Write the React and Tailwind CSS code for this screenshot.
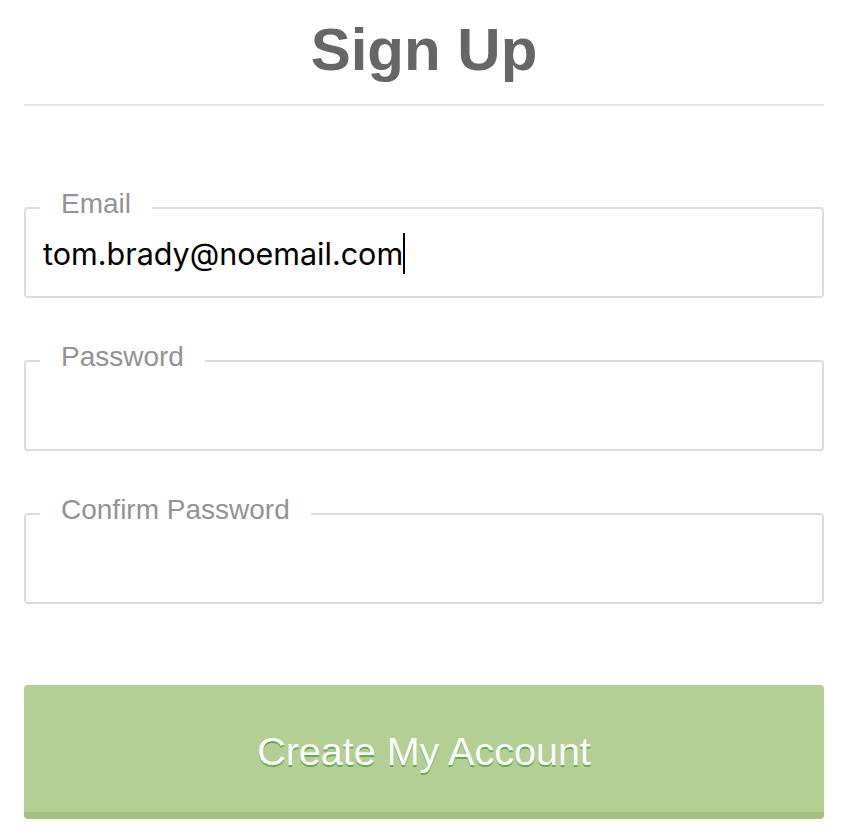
import React from "react";

function Field({ label, children }) {
    return (
        <fieldset className="m-0 border-2 border-[#dcdcdc] rounded-[4px] px-[14px] pt-0 pb-0">
            <legend className="px-[21px] pb-[8px] text-[28px] leading-[22px] text-[#939393]">{label}</legend>
            <div className="h-[73px]">{children}</div>
        </fieldset>
    );
}

export default function App() {
    return (
        <div className="w-[844px] h-[838px] bg-white pl-6 pr-5 font-['Liberation_Sans',Arial,sans-serif] overflow-hidden">
            {/* Header */}
            <h1 className="pt-5 text-center text-[60px] leading-[60px] font-bold text-[#666666]">Sign Up</h1>
            <div className="mt-6 h-[2px] bg-[#e6e6e6]" />

            {/* Fields */}
            <div className="mt-[87px] flex flex-col gap-[48px]">
                <Field label="Email">
                    <div className="pt-[10px] pl-[3px] flex items-center">
                        <span className="font-['Inter',sans-serif] text-[30.5px] leading-[40px] text-black">tom.brady@noemail.com</span>
                        <span className="inline-block w-[2px] h-[41px] bg-black" />
                    </div>
                </Field>
                <Field label="Password" />
                <Field label="Confirm Password" />
            </div>

            {/* Submit */}
            <button className="mt-[81px] w-full h-[134px] rounded-[4px] bg-[#b4cf94] border-b-[7px] border-[#a3bf7e] pt-[6px] text-white text-[39.5px] [text-shadow:0_2px_0_#62ad50]">
                Create My Account
            </button>
        </div>
    );
}
